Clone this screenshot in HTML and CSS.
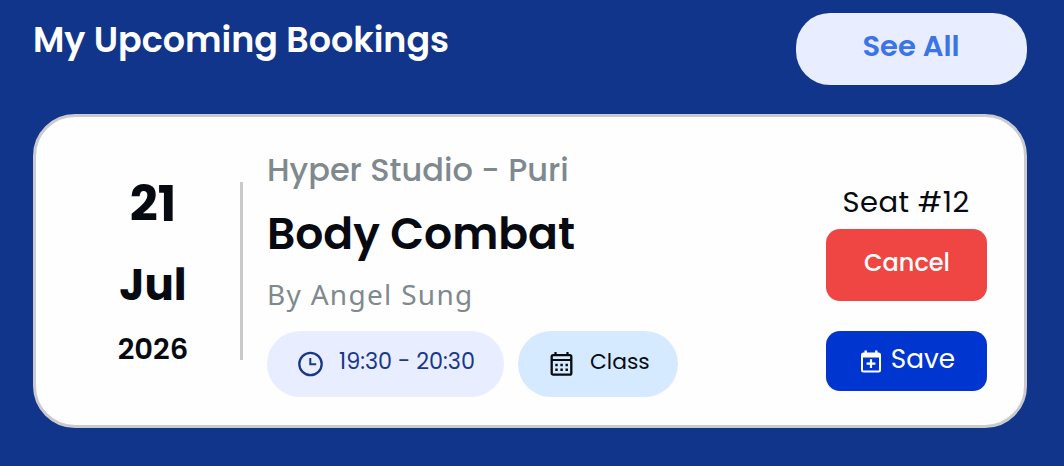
FILE: index.html
```
<!DOCTYPE html>
<html lang="en">
<head>
    <meta charset="UTF-8">
    <meta name="viewport" content="width=device-width, initial-scale=1.0">
    <title>My Upcoming Bookings</title>
    <link rel="stylesheet" href="styles.css">
</head>
<body>
    <div class="header">
        <h1>My Upcoming Bookings</h1>
        <button class="see-all">See All</button>
    </div>
    <div class="card">
        <div class="date">
            <div class="day">21</div>
            <div class="month">Jul</div>
            <div class="year">2026</div>
        </div>
        <div class="divider"></div>
        <div class="details">
            <div class="studio">Hyper Studio - Puri</div>
            <h2>Body Combat</h2>
            <div class="coach">By Angel Sung</div>
            <div class="tags">
                <div class="tag time">
                    <svg width="26" height="26" viewBox="0 0 26 26" fill="none" stroke="currentColor">
                        <circle cx="12.5" cy="13" r="11.2" stroke-width="2.3"/>
                        <path d="M12.3 7v6.3h5.9" stroke-width="2"/>
                    </svg>
                    <span>19:30 - 20:30</span>
                </div>
                <div class="tag class">
                    <svg width="24" height="26" viewBox="0 0 24 26" fill="none" stroke="currentColor">
                        <rect x="1.7" y="4.1" width="19.6" height="19.6" rx="1.5" stroke-width="2.3"/>
                        <path d="M5.5 1v4M17.5 1v4M2 9h19" stroke-width="2.2"/>
                        <path d="M5.3 14h13M5.3 18.8h13" stroke-width="2.4" stroke-dasharray="2.4 2.7"/>
                    </svg>
                    <span>Class</span>
                </div>
            </div>
        </div>
        <div class="actions">
            <div class="seat">Seat #12</div>
            <button class="cancel">Cancel</button>
            <button class="save">
                <svg width="20" height="23" viewBox="0 0 20 23" fill="none" stroke="currentColor">
                    <rect x="1" y="3.5" width="18" height="18" rx="1.5" stroke-width="2"/>
                    <path d="M1 5.5h18" stroke-width="4"/>
                    <path d="M4.7 .5v4M15.3 .5v4" stroke-width="2.4"/>
                    <path d="M10 9.2v8.8M5.6 13.6h8.8" stroke-width="2.2"/>
                </svg>
                <span>Save</span>
            </button>
        </div>
    </div>
</body>
</html>
```
FILE: styles.css
```
* {
    box-sizing: border-box;
}
body {
    font-family: Poppins, Inter, sans-serif;
    margin: 0;
    padding: 13px 37px 0 33px;
    height: 466px;
    background: #11358b;
    color: #080a12;
    white-space: nowrap;
    overflow: hidden;
}
h1, h2 {
    margin: 0;
    font-weight: 600;
}
button {
    display: block;
    padding: 0;
    border: 0;
    font-family: inherit;
    cursor: pointer;
}
.header {
    display: flex;
    justify-content: space-between;
    height: 72px;
}
h1 {
    font-size: 34.9px;
    line-height: 54px;
    color: white;
}
.see-all {
    width: 231px;
    height: 72px;
    padding-bottom: 5px;
    padding-right: 1px;
    border-radius: 34px;
    background: #e8eeff;
    color: #3b74e8;
    font-size: 29px;
    font-weight: 600;
}
.card {
    display: flex;
    height: 314px;
    margin-top: 29px;
    border: 3px solid #cbcbcf;
    border-radius: 42px;
    background: #fefefe;
}
.date {
    width: 204px;
    padding: 57px 0 0 30px;
    text-align: center;
    font-weight: 700;
}
.day {
    font-size: 49px;
    line-height: 60px;
}
.month {
    margin-top: 26px;
    font-size: 43.5px;
    line-height: 50px;
}
.year {
    margin-top: 21px;
    font-size: 29px;
    font-weight: 600;
    line-height: 36px;
}
.divider {
    width: 3px;
    height: 178px;
    margin-top: 65px;
    background: #c9c9c9;
}
.details {
    padding: 33px 0 0 24px;
}
.studio {
    font-size: 32px;
    font-weight: 500;
    line-height: 40px;
    color: #7f898e;
}
h2 {
    margin-top: 19px;
    font-size: 44px;
    line-height: 50px;
}
.coach {
    margin-top: 18px;
    font-family: "Noto Sans", sans-serif;
    font-size: 28px;
    line-height: 34px;
    letter-spacing: 1.3px;
    color: #7f898e;
}
.tags {
    display: flex;
    gap: 14px;
    margin-top: 20px;
}
.tag {
    display: flex;
    align-items: center;
    height: 66px;
    border-radius: 33px;
    font-size: 22.3px;
}
.tag span {
    padding-bottom: 6px;
}
.time {
    width: 237px;
    padding-left: 31px;
    gap: 15px;
    background: #e8eeff;
    color: #1b3788;
}
.class {
    width: 160px;
    padding-left: 32px;
    gap: 16px;
    background: #d6eaff;
}
.class span {
    font-size: 21.8px;
}
.actions {
    width: 161px;
    margin-left: auto;
    margin-right: 37px;
    padding-top: 67px;
}
.seat {
    font-size: 29px;
    line-height: 36px;
    letter-spacing: .5px;
    padding-right: 1px;
    text-align: center;
}
.cancel, .save {
    width: 161px;
    border-radius: 14px;
    color: white;
}
.cancel {
    height: 72px;
    margin-top: 9px;
    padding-bottom: 5px;
    padding-left: 1px;
    background: #ef4644;
    font-size: 24px;
    font-weight: 500;
}
.save {
    display: flex;
    align-items: center;
    justify-content: center;
    gap: 10px;
    height: 60px;
    margin-top: 30px;
    padding-left: 3px;
    background: #0036cf;
    font-size: 26.3px;
}
.save span {
    padding-bottom: 4px;
}
```
